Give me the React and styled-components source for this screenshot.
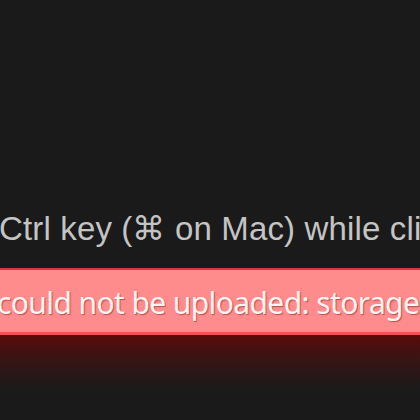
import React from "react";
import styled, { createGlobalStyle } from "styled-components";

const Global = createGlobalStyle`
  html, body { margin: 0; padding: 0; background: #1a1a1a; }
  body { width: 420px; height: 420px; overflow: hidden; }
`;

const Page = styled.div`
  width: 420px;
  height: 420px;
  overflow: hidden;
  display: flex;
  flex-direction: column;
  background: #1a1a1a;
`;

const Hint = styled.p`
  margin: 205px 0 0 -1px;
  height: 48px;
  line-height: 48px;
  font-family: "Liberation Sans", Arial, sans-serif;
  font-size: 33px;
  letter-spacing: 0.15px;
  color: #c4c4c4;
  white-space: nowrap;
  overflow: hidden;
`;

const ErrorBar = styled.div`
  margin-top: 15px;
  height: 62px;
  border-top: 2px solid #d83a3a;
  border-bottom: 3px solid #f05050;
  background: #ff8c8c;
  display: flex;
  align-items: center;
  overflow: hidden;
  white-space: nowrap;
`;

const ErrorText = styled.span`
  margin-left: -3px;
  margin-top: 2px;
  font-family: "Noto Sans", "Open Sans", sans-serif;
  font-size: 30px;
  letter-spacing: -0.6px;
  color: #fff4f4;
  text-shadow: 1px 1px 1px rgba(120, 0, 0, 0.45);
`;

const Glow = styled.div`
  height: 55px;
  background: linear-gradient(to bottom, #5c0a0a 0%, #3a1414 40%, #1a1a1a 100%);
`;

export default function App() {
  return (
    <Page>
      <Global />
      <Hint>Ctrl key (⌘ on Mac) while clicking to select</Hint>
      <ErrorBar>
        <ErrorText>could not be uploaded: storage quota exceeded</ErrorText>
      </ErrorBar>
      <Glow />
    </Page>
  );
}
